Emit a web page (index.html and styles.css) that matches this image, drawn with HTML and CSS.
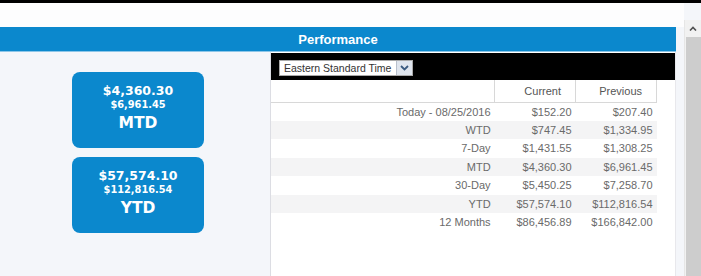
FILE: index.html
```html
<!DOCTYPE html>
<html lang="en">
<head>
    <meta charset="UTF-8">
    <title>Performance</title>
    <link rel="stylesheet" href="styles.css">
</head>
<body>
    <div class="topline"></div>
    <div class="frame">
        <div class="main">
            <div class="topgap"></div>
            <div class="titlebar">Performance</div>

            <div class="content">
                <!-- summary tiles -->
                <div class="summary">
                    <div class="card">
                        <div class="cur">$4,360.30</div>
                        <div class="prev">$6,961.45</div>
                        <div class="label">MTD</div>
                    </div>
                    <div class="card">
                        <div class="cur">$57,574.10</div>
                        <div class="prev">$112,816.54</div>
                        <div class="label">YTD</div>
                    </div>
                </div>

                <!-- performance grid -->
                <div class="perf">
                    <div class="toolbar">
                        <div class="tz-select">
                            <span class="tz-text">Eastern Standard Time</span>
                            <span class="tz-btn">
                                <svg width="9" height="6" viewBox="0 0 9 6"><path d="M1 1 L4.5 4.5 L8 1" fill="none" stroke="#3a5a80" stroke-width="1.8"/></svg>
                            </span>
                        </div>
                    </div>
                    <table class="grid">
                        <thead>
                            <tr>
                                <th class="c-label"></th>
                                <th class="c-num">Current</th>
                                <th class="c-num">Previous</th>
                            </tr>
                        </thead>
                        <tbody>
                            <tr><td>Today - 08/25/2016</td><td>$152.20</td><td>$207.40</td></tr>
                            <tr><td>WTD</td><td>$747.45</td><td>$1,334.95</td></tr>
                            <tr><td>7-Day</td><td>$1,431.55</td><td>$1,308.25</td></tr>
                            <tr><td>MTD</td><td>$4,360.30</td><td>$6,961.45</td></tr>
                            <tr><td>30-Day</td><td>$5,450.25</td><td>$7,258.70</td></tr>
                            <tr><td>YTD</td><td>$57,574.10</td><td>$112,816.54</td></tr>
                            <tr><td>12 Months</td><td>$86,456.89</td><td>$166,842.00</td></tr>
                        </tbody>
                    </table>
                </div>
            </div>
        </div>

        <div class="scrollbar">
            <div class="sb-up">
                <svg width="8" height="5" viewBox="0 0 8 5"><path d="M1 4.5 L4 1.5 L7 4.5" fill="none" stroke="#505050" stroke-width="1.6"/></svg>
            </div>
            <div class="sb-thumb"></div>
        </div>
    </div>
</body>
</html>
```

FILE: styles.css
```css
* {
    box-sizing: border-box;
}

body {
    margin: 0;
    height: 276px;
    overflow: hidden;
    font-family: "Liberation Sans", Arial, sans-serif;
    background: #f4f6fa;
}

.topline {
    height: 3px;
    background: #000;
}

.frame {
    display: flex;
    height: 273px;
}

.main {
    width: 684px;
}

.topgap {
    height: 24px;
    background: #fdfdfe;
}

.titlebar {
    width: 676px;
    height: 25px;
    line-height: 25px;
    background: #0b88cd;
    border-bottom: 1px solid #8cc6e8;
    color: #fff;
    font-weight: bold;
    font-size: 13px;
    text-align: center;
}

.content {
    display: flex;
}

/* summary tiles */
.summary {
    width: 270px;
    padding: 20px 0 0 72px;
    display: flex;
    flex-direction: column;
    gap: 9px;
}

.card {
    width: 132px;
    height: 76px;
    border-radius: 8px;
    background: #0b88cd;
    color: #fff;
    text-align: center;
    font-family: "DejaVu Sans", Verdana, sans-serif;
    font-weight: bold;
    padding-top: 12px;
}

.card .cur {
    font-size: 12.5px;
    line-height: 14px;
}

.card .prev {
    font-size: 9.8px;
    line-height: 14px;
}

.card .label {
    font-size: 15.5px;
    line-height: 22px;
}

/* grid panel */
.perf {
    width: 406px;
    height: 224px;
    background: #fff;
    border-left: 1px solid #dcdde3;
    border-right: 1px solid #e8e8ec;
    padding-top: 1px;
}

.toolbar {
    height: 27px;
    background: #000;
    padding: 7px 0 0 8px;
}

.tz-select {
    display: flex;
    width: 134px;
    height: 16px;
    background: #fff;
    border: 1px solid #a9a9a9;
}

.tz-text {
    flex: 1;
    font-size: 10.5px;
    line-height: 14px;
    color: #333;
    padding-left: 4px;
    white-space: nowrap;
    overflow: hidden;
}

.tz-btn {
    width: 16px;
    background: #dfe5ee;
    border-left: 1px solid #b8c0cc;
    display: flex;
    align-items: center;
    justify-content: center;
}

.grid {
    width: 386px;
    border-collapse: collapse;
    font-size: 11px;
    color: #6a6a6a;
}

.grid th {
    height: 22px;
    font-weight: normal;
    color: #555;
    text-align: right;
    padding: 0 14px 0 0;
    border-bottom: 1px solid #d8d8d8;
    border-left: 1px solid #d8d8d8;
}

.grid th:first-child {
    border-left: none;
}

.grid th:last-child {
    border-right: 1px solid #d8d8d8;
}

.grid .c-label {
    width: 224px;
}

.grid .c-num {
    width: 81px;
}

.grid td {
    height: 18.5px;
    padding: 0 4px 0 0;
    text-align: right;
}

.grid tbody tr:nth-child(even) {
    background: #f4f4f5;
}

/* page scrollbar */
.scrollbar {
    width: 17px;
    margin-top: 17px;
    background: #f1f1f1;
    border-left: 1px solid #e6e6e6;
    display: flex;
    flex-direction: column;
}

.sb-up {
    height: 17px;
    display: flex;
    align-items: center;
    justify-content: center;
}

.sb-thumb {
    flex: 1;
    margin-left: 1px;
    background: #cdcdcd;
}
```
